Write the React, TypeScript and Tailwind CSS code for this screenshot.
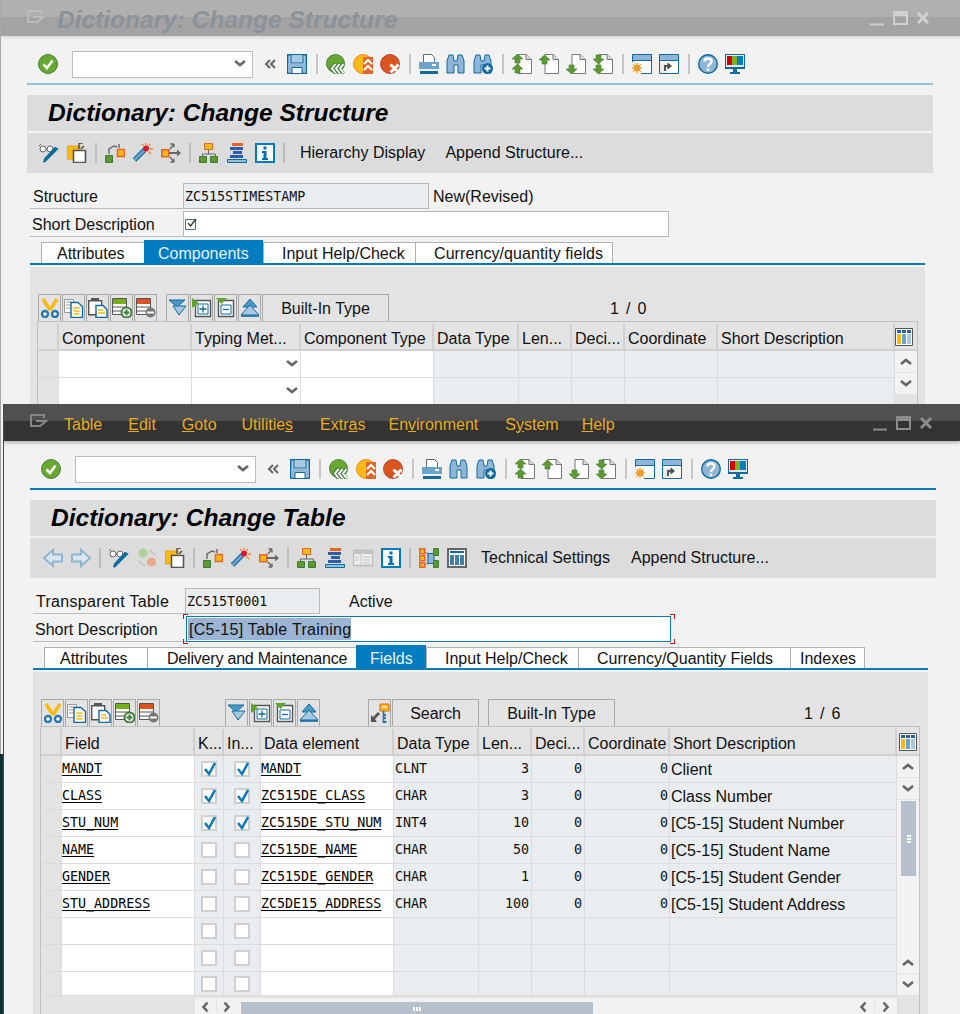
import React from 'react';

const BLUE = '#0f6a9e';
const LIGHT = '#8fb6d8';
const GREEN = '#5d9a2e';
const DGREEN = '#3f7d3a';
const ORANGE = '#e2662a';
const YELLOW = '#fdb913';
const GRAY = '#666666';

const Ic: React.FC<{ children: React.ReactNode; w?: number }> = ({ children, w = 20 }) => (
  <svg width={w} height={20} viewBox={`0 0 ${w} 20`} className="shrink-0 block">
    {children}
  </svg>
);

const OkIcon = () => (
  <Ic>
    <circle cx="10" cy="10" r="9.5" fill="#69a82f" stroke="#4c8044" />
    <path d="M5.5 10.5 9 14 14.5 6.5" fill="none" stroke="#fff" strokeWidth="2.6" />
  </Ic>
);
const SaveIcon = () => (
  <Ic>
    <path d="M.7.7h18.600v18.600H.7z" fill="#a9c8e2" stroke={BLUE} strokeWidth="1.400" />
    <path d="M4 1v8h12V1" fill="#a9c8e2" stroke={BLUE} />
    <path d="M1 9.500h18v9H1z" fill={LIGHT} />
    <path d="M5 13.500h10v6H5z" fill="#fff" stroke={BLUE} />
  </Ic>
);
const BackIcon = () => (
  <Ic>
    <circle cx="9.500" cy="9.500" r="9" fill="#69a82f" stroke="#4c8044" />
    <path d="M9.500 9.500l-4 5 4 5M13.500 9.500l-4 5 4 5M17.500 9.500l-4 5 4 5" fill="none" stroke="#3f7d3a" strokeWidth="3.400" />
    <path d="M9.500 10l-3.500 4.500 3.500 4.500M13.500 10l-3.500 4.500 3.500 4.500M17.500 10l-3.500 4.500 3.500 4.500" fill="none" stroke="#fff" strokeWidth="2" />
  </Ic>
);
const ExitIcon = () => (
  <Ic>
    <circle cx="10" cy="10" r="9.500" fill={YELLOW} stroke="#e58a2a" />
    <path d="M10 3h10v17H10z" fill={ORANGE} />
    <path d="M11 10l4-4 4 4M11 16l4-4 4 4" fill="none" stroke="#fff" strokeWidth="2.200" />
  </Ic>
);
const CancelIcon = () => (
  <Ic>
    <circle cx="10" cy="10" r="9.500" fill="#d9541e" stroke="#bf4a35" />
    <path d="M10.500 10.500l8 8M18.500 10.500l-8 8" stroke="#fff" strokeWidth="3" />
  </Ic>
);
const PrintIcon = () => (
  <Ic>
    <path d="M4.500.5h8l3 3v5h-11z" fill="#fff" stroke="#666" />
    <path d="M0 8h20v7H0z" fill="#6ba3cc" />
    <path d="M13 10h4v2h-4z" fill="#fff" />
    <path d="M1 17h18v3H1z" fill={BLUE} />
  </Ic>
);
const Binoc = ({ plus }: { plus?: boolean }) => (
  <Ic>
    <path d="M1 19V7l2-6h4l1 6h3l1-6h4l2 6v12h-6v-8H8v8z" fill={LIGHT} stroke={BLUE} />
    {plus && (
      <>
        <circle cx="14.500" cy="14.500" r="5.500" fill={BLUE} />
        <path d="M11.500 14.500h6M14.500 11.500v6" stroke="#fff" strokeWidth="2" />
      </>
    )}
  </Ic>
);
const UP = 'M5.500 0 11 5H8v4H3V5H0z';
const Page = ({ arrows }: { arrows: 'first' | 'prev' | 'next' | 'last' }) => (
  <Ic>
    <path d="M6 .5h8l5.500 5v14H6z" fill="#fff" stroke="#777" />
    <path d="M14 .5v5h5.500" fill="#ddd" stroke="#777" />
    <g fill={GREEN} stroke={DGREEN} strokeWidth=".6">
      {arrows === 'first' && (
        <>
          <path d={UP} />
          <path d={UP} transform="translate(0 10)" />
        </>
      )}
      {arrows === 'prev' && <path d={UP} transform="translate(0 1)" />}
      {arrows === 'next' && <path d={UP} transform="translate(0 20) scale(1 -1)" />}
      {arrows === 'last' && (
        <>
          <path d={UP} transform="translate(0 10) scale(1 -1)" />
          <path d={UP} transform="translate(0 20) scale(1 -1)" />
        </>
      )}
    </g>
  </Ic>
);
const WinSun = () => (
  <Ic>
    <path d="M.5.5h19v19H.5z" fill="#fff" stroke={BLUE} />
    <path d="M1 1h18v5H1z" fill={LIGHT} />
    <path d="M0 6h20v1H0z" fill={BLUE} />
    <path d="M0 8h9v12H0z" fill="#f2f2f2" />
    <circle cx="5" cy="14" r="3.500" fill="#f59a23" />
    <path d="M5 8.500v11M-.5 14h11M1 10l8 8M9 10l-8 8" stroke="#f59a23" />
  </Ic>
);
const WinArrow = () => (
  <Ic>
    <path d="M.5.5h19v19H.5z" fill="#fff" stroke={BLUE} />
    <path d="M1 1h18v5H1z" fill={LIGHT} />
    <path d="M0 6h20v1H0z" fill={BLUE} />
    <path d="M1 9h8v10H1z" fill="#ececec" />
    <path d="M6 17v-5h5M8.500 9.500 11.500 12 8.500 14.500" fill="none" stroke="#555" strokeWidth="2" />
  </Ic>
);
const HelpIcon = () => (
  <Ic>
    <circle cx="10" cy="10" r="9.300" fill="#8fb6d8" stroke={BLUE} strokeWidth="1.400" />
    <path d="M6.500 7.500C6.500 3.500 13.500 3.500 13.500 7.500 13.500 10 10 10 10 13" fill="none" stroke="#fff" strokeWidth="2.400" />
    <path d="M8.700 14.500h2.600v2.600H8.700z" fill="#fff" />
  </Ic>
);
const MonitorIcon = () => (
  <Ic>
    <path d="M0 0h20v15H0z" fill={BLUE} />
    <path d="M1 1h18v12H1z" fill="#dfe8ef" />
    <path d="M2 2h5v9H2z" fill="#d40000" />
    <path d="M7 2h5v9H7z" fill="#7ab51d" />
    <path d="M12 2h6v9h-6z" fill="#0a7dc2" />
    <path d="M8 15h4v3H8zM5 18h10v2H5z" fill={BLUE} />
  </Ic>
);

const GlassesPen = () => (
  <Ic>
    <circle cx="4" cy="6" r="3" fill="#fff" stroke="#666" />
    <circle cx="11" cy="6" r="3" fill="#fff" stroke="#666" />
    <path d="M0 3l2-2M7 6h1" stroke="#666" />
    <path d="M18 6 7 17l-2 2 1-3L16 5z" fill="#3f7fb5" stroke={BLUE} strokeWidth="2" />
  </Ic>
);
const CopyObj = () => (
  <Ic>
    <path d="M0 3h13v13H0z" fill={YELLOW} stroke="#e8a010" />
    <path d="M6.500 7.500h12v12h-12z" fill="#fff" stroke="#555" strokeWidth="1.600" />
    <path d="M12 0v6M12 0h4M14 6l3-3" stroke="#444" strokeWidth="1.300" fill="none" />
  </Ic>
);
const Circles = () => (
  <Ic>
    <circle cx="6" cy="5" r="4.500" fill="#b3d09a" />
    <circle cx="14.500" cy="14" r="4.500" fill="#eda98c" />
    <path d="M12 3c3 0 5 2 6 5M8 17c-3 0-5-2-6-5" fill="none" stroke="#c8c8c8" strokeWidth="2" />
  </Ic>
);
const Nodes = () => (
  <Ic>
    <path d="M.5 12.500h7v7h-7z" fill={GREEN} stroke={DGREEN} />
    <path d="M12.500 6.500h7v7h-7z" fill={YELLOW} stroke={ORANGE} strokeWidth="1.500" />
    <path d="M4 11V6l5-3 3 1M14 1v4" fill="none" stroke="#666" strokeWidth="1.400" />
  </Ic>
);
const Wand = () => (
  <Ic>
    <path d="M11.500 7 1.500 17" stroke={BLUE} strokeWidth="5" />
    <path d="M11.500 7 1.500 17" stroke="#6ba3cc" strokeWidth="2.600" />
    <circle cx="13" cy="5.500" r="3" fill="#e3142d" />
    <path d="M13 0v2M17 1l-1.500 1.500M20 6h-3M18 11l-2.500-2.500M9 1l1.500 1.500" stroke="#f08c1e" strokeWidth="1.400" />
  </Ic>
);
const Distribute = () => (
  <Ic>
    <path d="M.8 6.800h7v7h-7z" fill={YELLOW} stroke={ORANGE} strokeWidth="1.600" />
    <path d="M8 10h10" stroke="#666" strokeWidth="2" />
    <path d="M16 6.500l4 3.500-4 3.500z" fill="#666" />
    <path d="M9 6l4-5M13 1H9.500M13 1v3.500M9 14l4 5M13 19H9.500M13 19v-3.500" fill="none" stroke="#666" strokeWidth="1.300" />
  </Ic>
);
const Hierarchy = () => (
  <Ic>
    <path d="M5.500.5h8v6h-8z" fill={YELLOW} stroke={ORANGE} />
    <path d="M9.500 7v4M3.500 14v-3h13v3" fill="none" stroke="#666" />
    <path d="M.5 13.500h7v6h-7zM11.500 13.500h7v6h-7z" fill={GREEN} stroke={DGREEN} />
  </Ic>
);
const Stack = () => (
  <Ic>
    <path d="M5 0h11v3H5z" fill={ORANGE} />
    <path d="M3 4h13v3H3zM6 8h9v3H6zM3 12h13v3H3z" fill="#2c5ea8" />
    <path d="M.5 16.500h19v3H.5z" fill="#8fc3dd" stroke={BLUE} />
  </Ic>
);
const InfoIcon = () => (
  <Ic>
    <path d="M1 1h18v18H1z" fill="#fff" stroke="#007cc0" strokeWidth="2" />
    <path d="M8.500 3.500h3v3h-3zM7 8h4.500v7H13v2H7v-2h1.500V10H7z" fill="#0070b0" />
  </Ic>
);
const ArrowBack = ({ flip }: { flip?: boolean }) => (
  <Ic>
    <path
      d={flip ? 'M1 6.500h9V2l9 8-9 8v-4.500H1z' : 'M19 6.500h-9V2L1 10l9 8v-4.500h9z'}
      fill="#dbe6ef"
      stroke="#8fb6d0"
      strokeWidth="2"
    />
  </Ic>
);
const SheetGray = () => (
  <Ic>
    <path d="M.5 2.500h19v15H.5z" fill="#eee" stroke="#bcbcbc" strokeWidth="1.400" />
    <path d="M1 3h18v3H1z" fill="#c4c4c4" />
    <path d="M8 6v11M10 9h7M10 12h7M10 15h7M2 9h4M2 12h4" stroke="#c4c4c4" />
  </Ic>
);
const Blocks = () => (
  <Ic>
    <path d="M.8.800h5v5h-5zM.8 7.800h5v5h-5zM.8 14.800h5v4.500h-5z" fill={YELLOW} stroke={ORANGE} strokeWidth="1.500" />
    <path d="M6 5h3v11H6" fill="none" stroke="#888" />
    <path d="M9 5.500h6v10H9z" fill="#8fb6d8" stroke={BLUE} />
    <path d="M15 5h1M15 15h1" stroke="#888" />
    <path d="M14.500.500h5v7h-5zM14.500 12.500h5v7h-5z" fill={GREEN} stroke={DGREEN} />
  </Ic>
);
const TableIcon = () => (
  <Ic>
    <path d="M1 1h18v18H1z" fill="#fff" stroke="#666" strokeWidth="2" />
    <path d="M3 3h14v2H3z" fill={BLUE} />
    <path d="M3 7h4v10H3zM8 7h4v10H8zM13 7h4v10h-4z" fill="#3f7fa8" />
  </Ic>
);

const Scissors = () => (
  <Ic>
    <path d="M3 1l7 11M17 1 10 12" stroke={YELLOW} strokeWidth="3.600" />
    <circle cx="5" cy="16" r="3" fill="#fff" stroke="#2a78ae" strokeWidth="2.400" />
    <circle cx="15" cy="16" r="3" fill="#fff" stroke="#2a78ae" strokeWidth="2.400" />
  </Ic>
);
const CopyDoc = () => (
  <Ic>
    <path d="M.5 1.500h9v13h-9z" fill="#fff" stroke="#999" />
    <path d="M2 4h6M2 7h6M2 10h6" stroke="#999" />
    <path d="M7 4.500h7l4.500 4v11H7z" fill="#fff" stroke={BLUE} strokeWidth="1.400" />
    <path d="M9.500 10h6M9.500 13h6M9.500 16h6" stroke={YELLOW} strokeWidth="1.500" />
  </Ic>
);
const PasteDoc = () => (
  <Ic>
    <path d="M.7 2.700h13v14h-13z" fill="#fff" stroke="#555" strokeWidth="1.400" />
    <path d="M3 0h8v3H3z" fill="#555" />
    <path d="M8 7.500h7l4 4v8H8z" fill="#fff" stroke={BLUE} strokeWidth="1.400" />
    <path d="M10 12h5M10 15h7" stroke={YELLOW} strokeWidth="1.500" />
  </Ic>
);
const RowAdd = () => (
  <Ic>
    <path d="M.5.500h14v16H.5z" fill="#fff" stroke="#555" />
    <path d="M1 1h13v5H1z" fill="#72b01d" />
    <path d="M1 9h13M1 13h13" stroke="#555" />
    <circle cx="14.500" cy="14.500" r="5" fill="#fff" stroke={DGREEN} strokeWidth="2" />
    <path d="M11.500 14.500h6M14.500 11.500v6" stroke={DGREEN} strokeWidth="2" />
  </Ic>
);
const RowDel = () => (
  <Ic>
    <path d="M.5.500h14v16H.5z" fill="#fff" stroke="#555" />
    <path d="M1 1h13v5H1z" fill="#d9541e" />
    <path d="M1 9h13M1 13h13" stroke="#555" />
    <circle cx="14.500" cy="14.500" r="5" fill="#777" />
    <path d="M11 14.500h7" stroke="#fff" strokeWidth="2" />
  </Ic>
);
const FunnelDown = () => (
  <Ic>
    <path d="M1 2h16l-8 7z" fill="#4a9ac8" stroke={BLUE} />
    <path d="M5 8h13l-7 9z" fill="#a9c8e2" stroke={BLUE} />
  </Ic>
);
const FunnelUp = () => (
  <Ic>
    <path d="M10 1l7 8H3z" fill="#4a9ac8" stroke={BLUE} />
    <path d="M10 7l9 10H1z" fill="#a9c8e2" stroke={BLUE} />
    <path d="M1 18h18" stroke={BLUE} strokeWidth="1.600" />
  </Ic>
);
const FrameAdd = () => (
  <Ic>
    <path d="M3.500 2.500h15v16h-15z" fill="#fff" stroke="#555" strokeWidth="1.400" />
    <path d="M6 6h10v10H6z" fill="#fff" stroke={BLUE} />
    <path d="M7.500 11h7M11 7.500v7" stroke={BLUE} strokeWidth="1.300" />
    <path d="M0 0l7 5-7 5z" fill="#5fa52a" />
  </Ic>
);
const FrameDel = () => (
  <Ic>
    <path d="M2.500 2.500h15v16h-15z" fill="#fff" stroke="#555" strokeWidth="1.400" />
    <path d="M5 7h10v9H5z" fill="#fff" stroke={BLUE} />
    <path d="M7 11.500h6" stroke={BLUE} strokeWidth="1.300" />
    <path d="M0 0h11L5.500 6z" fill="#5fa52a" />
  </Ic>
);
const KeyIcon = () => (
  <Ic>
    <path d="M10 1h9v7h-9z" fill={YELLOW} stroke={ORANGE} />
    <path d="M12 4h5" stroke="#fff" />
    <path d="M13.500 8v11h3M16 12h-2M16 15h-2" fill="none" stroke="#2a78ae" strokeWidth="1.800" />
    <path d="M1 19V12l2 2 5-5 2 2-5 5 2 3z" fill="#555" />
  </Ic>
);
const ColumnsIcon = () => (
  <svg width={18} height={18} viewBox="0 0 18 18" className="block shrink-0">
    <path d="M.5.500h17v17H.5z" fill="#fff" stroke="#555" />
    <path d="M2 2h4v3H2zM7 2h4v3H7zM12 2h4v3h-4z" fill="#2c5ea8" />
    <path d="M2 6h4v10H2z" fill={YELLOW} />
    <path d="M7 6h4v10H7z" fill="#6ba3cc" />
    <path d="M12 6h4v10h-4z" fill="#a9c8e2" />
  </svg>
);

const Chev = ({ dir = 'down' }: { dir?: 'down' | 'up' | 'left' | 'right' | 'dleft' }) => {
  if (dir === 'dleft')
    return (
      <svg width={12} height={12} viewBox="0 0 12 12" className="block shrink-0">
        <path d="M6 2 2 6l4 4M11 2 7 6l4 4" fill="none" stroke={GRAY} strokeWidth="2" />
      </svg>
    );
  const d = {
    down: 'M2 3l5 4 5-4',
    up: 'M2 8l5-4 5 4',
    left: 'M8.500 1.500 4.500 6l4 4.500',
    right: 'M4.500 1.500 8.500 6l-4 4.500',
  }[dir];
  return (
    <svg width={14} height={12} viewBox="0 0 14 12" className="block shrink-0">
      <path d={d} fill="none" stroke={GRAY} strokeWidth="2.600" />
    </svg>
  );
};

const TopSep = () => <div className="w-[2px] h-5 bg-[#c6c6c6] ml-[2px] mr-[1px] shrink-0" />;
const BarSep = () => <div className="w-[2px] h-5 bg-[#bcbcbc] shrink-0" />;

const TitleBar: React.FC<{ active?: boolean; title?: string; menu?: [string, string, string, number][] }> = ({ active, title, menu }) => (
  <div
    className={
      active
        ? 'relative h-[37px] flex items-center shrink-0 bg-[linear-gradient(#505050_0_17px,#333333_17px)] shadow-[0_2px_3px_rgba(0,0,0,0.25)]'
        : 'relative h-[36px] flex items-center shrink-0 bg-[linear-gradient(#b0b0b0_0_17px,#a3a3a3_17px)] shadow-[0_2px_3px_rgba(0,0,0,0.1)]'
    }
  >
    <svg width={18} height={14} viewBox="0 0 18 14" className="ml-[26px] mb-[3px] shrink-0 block">
      <path d="M1 1h13v3M1 1v11h9l6-5H6" fill="none" stroke={active ? '#888888' : '#bcbcbc'} strokeWidth="2" />
    </svg>
    {title && (
      <span className="ml-[12px] mt-[4px] text-[24.5px] leading-none font-bold italic text-[#8b9299] whitespace-nowrap">{title}</span>
    )}
    {menu && (
      <div className="ml-[16px] mt-[4px] flex text-[#e8ad1e] text-[16px] leading-none whitespace-nowrap">
        {menu.map(([a, b, c, gap]) => (
          <span key={a + b + c} style={{ marginRight: gap }}>
            {a}
            <span className="underline">{b}</span>
            {c}
          </span>
        ))}
      </div>
    )}
    <div className={active ? 'ml-auto flex items-end mr-[25px] text-[#8c8c8c]' : 'ml-auto flex items-end mr-[28px] text-[#d0d0d0]'}>
      <svg width={62} height={16} viewBox="0 0 62 16" className="block" stroke="currentColor" fill="none">
        <path d="M0 14.500h14" strokeWidth="2" />
        <path d="M24 2h13v12H24z" strokeWidth="2" />
        <path d="M24 4h13" strokeWidth="4" />
        <path d="M48 3l10 10M58 3 48 13" strokeWidth="3" />
      </svg>
    </div>
  </div>
);

const MainToolbar = () => (
  <div className="h-[47px] pt-[9px] pl-[37px] flex items-center gap-[7px] shrink-0">
    <OkIcon />
    <div className="ml-[7px] w-[181px] h-[27px] bg-white border border-[#bcbcbc] flex items-center justify-end pr-[5px] shrink-0">
      <Chev />
    </div>
    <div className="ml-[4px] mr-[4px]">
      <Chev dir="dleft" />
    </div>
    <SaveIcon />
    <TopSep />
    <BackIcon />
    <ExitIcon />
    <CancelIcon />
    <TopSep />
    <PrintIcon />
    <Binoc />
    <Binoc plus />
    <TopSep />
    <Page arrows="first" />
    <Page arrows="prev" />
    <Page arrows="next" />
    <Page arrows="last" />
    <TopSep />
    <WinSun />
    <WinArrow />
    <TopSep />
    <HelpIcon />
    <MonitorIcon />
  </div>
);

const TitleBand: React.FC<{ active?: boolean; title: string; children: React.ReactNode }> = ({ active, title, children }) => (
  <div className="ml-[26px] w-[906px] shrink-0">
    <div className={active ? 'h-[2px] bg-[#0a7ab8]' : 'h-[2px] bg-[#8fc3dd]'} />
    <div className="mt-[10px] h-[36px] bg-[#dcdcdc] pl-[21px] flex items-center">
      <span className="text-[24.5px] leading-none font-bold italic text-black whitespace-nowrap">{title}</span>
    </div>
    <div className="mt-[2px] h-[40px] bg-[#dcdcdc] flex items-center gap-[8px] text-[16px] text-[#111111] whitespace-nowrap">
      {children}
    </div>
  </div>
);

const FormRow: React.FC<{ label: string; children: React.ReactNode; pad?: string }> = ({ label, children, pad = 'pl-[3px]' }) => (
  <div className="flex h-[26px] ml-[3px]">
    <div className={`w-[153px] border-b border-[#bcbcbc] text-[16px] leading-[27px] text-[#111111] whitespace-nowrap ${pad}`}>{label}</div>
    {children}
  </div>
);

type TabItem = { name: string; w: string; pl: string; extra?: string };

const Tabs: React.FC<{ items: TabItem[]; activeName: string }> = ({ items, activeName }) => (
  <div className="ml-[3px] w-[895px] mt-[5px] border-b-2 border-[#0a7ab8] h-[23px] pl-[11px] flex items-end shrink-0">
    {items.map((t, i) =>
      t.name === activeName ? (
        <div key={t.name} className={`${t.w} ${t.pl} h-[23px] bg-[#007cc0] text-[#e8f4fb] text-[16px] leading-[27px]`}>
          {t.name}
        </div>
      ) : (
        <div
          key={t.name}
          className={`${t.w} ${t.pl} ${t.extra ?? ''} ${i === items.length - 1 ? 'border-r' : ''} h-[21px] bg-white border-l border-t border-[#b0b0b0] text-[16px] leading-[21px] text-[#111111] whitespace-nowrap`}
        >
          {t.name}
        </div>
      ),
    )}
  </div>
);

const ToolBtn: React.FC<{ children: React.ReactNode }> = ({ children }) => (
  <div className="w-[23px] h-[27px] border-t border-l border-r border-[#a8a8a8] flex items-center justify-center shrink-0 overflow-hidden">
    {children}
  </div>
);
const TextBtn: React.FC<{ children: React.ReactNode; w: string }> = ({ children, w }) => (
  <div className={`${w} h-[27px] border-t border-l border-r border-[#a8a8a8] text-[16px] leading-[28px] text-center text-[#111111] shrink-0`}>
    {children}
  </div>
);

const HeadCell: React.FC<{ children?: React.ReactNode }> = ({ children }) => (
  <div className="h-[27px] border-r-2 border-b-2 border-[#d0d0d0] pl-[3px] text-[16px] leading-[30px] text-[#111111] whitespace-nowrap overflow-hidden">
    {children}
  </div>
);

const Cb = ({ on }: { on?: boolean }) => (
  <div className="w-[16px] h-[16px] bg-white border-2 border-[#cfcfcf] relative">
    {on && (
      <svg width={14} height={16} viewBox="0 0 14 16" className="absolute left-[0px] top-[-2px] block">
        <path d="M2 8l4 5 6-11" fill="none" stroke="#0a7ab8" strokeWidth="2.600" />
      </svg>
    )}
  </div>
);

const cellBase = 'border-r border-b border-[#dcdcdc] overflow-hidden whitespace-nowrap';

const ScrollBtn = ({ dir }: { dir: 'up' | 'down' }) => (
  <div className="h-[22px] bg-[#f2f2f2] border-b border-[#e3e3e3] flex items-center justify-center">
    <Chev dir={dir} />
  </div>
);

const COLS_ONE = 'grid-cols-[21px_133px_109px_133px_85px_53px_53px_93px_177px]';
const COLS_TWO = 'grid-cols-[21px_133px_29px_37px_133px_85px_53px_53px_85px_227px]';

const StructureTable = () => (
  <div className="ml-[7px] w-[881px] border-t border-l border-r border-[#c0c0c0] pt-[2px]">
    <div className="grid grid-cols-[21px_133px_109px_133px_85px_53px_53px_93px_177px_22px]">
      {['', 'Component', 'Typing Met...', 'Component Type', 'Data Type', 'Len...', 'Deci...', 'Coordinate', 'Short Description'].map((h) => (
        <HeadCell key={h}>{h}</HeadCell>
      ))}
      <div className="h-[27px] border-b-2 border-[#d0d0d0] pt-[4px]">
        <ColumnsIcon />
      </div>
    </div>
    <div className="flex">
      <div className="flex-1">
        {[0, 1, 2].map((r) => (
          <div key={r} className={`grid ${COLS_ONE} h-[27px]`}>
            <div className={cellBase} />
            <div className={`${cellBase} bg-white`} />
            <div className={`${cellBase} bg-white flex items-center justify-end pr-[1px]`}>
              <Chev />
            </div>
            <div className={`${cellBase} bg-white`} />
            {[0, 1, 2, 3, 4].map((c) => (
              <div key={c} className={`${cellBase} bg-[#e9edf0]`} />
            ))}
          </div>
        ))}
      </div>
      <div className="w-[22px]">
        <ScrollBtn dir="up" />
        <ScrollBtn dir="down" />
      </div>
    </div>
  </div>
);

const fields: [string, boolean, string, string, string, string, string][] = [
  ['MANDT', true, 'MANDT', 'CLNT', '3', '0', 'Client'],
  ['CLASS', true, 'ZC515DE_CLASS', 'CHAR', '3', '0', 'Class Number'],
  ['STU_NUM', true, 'ZC515DE_STU_NUM', 'INT4', '10', '0', '[C5-15] Student Number'],
  ['NAME', false, 'ZC515DE_NAME', 'CHAR', '50', '0', '[C5-15] Student Name'],
  ['GENDER', false, 'ZC515DE_GENDER', 'CHAR', '1', '0', '[C5-15] Student Gender'],
  ['STU_ADDRESS', false, 'ZC5DE15_ADDRESS', 'CHAR', '100', '0', '[C5-15] Student Address'],
  ['', false, '', '', '', '', ''],
  ['', false, '', '', '', '', ''],
  ['', false, '', '', '', '', ''],
];

const mono = "font-['DejaVu_Sans_Mono',monospace] text-[13.33px] leading-[26px]";

const FieldsTable = () => (
  <div className="ml-[7px] w-[880px] border-t border-l border-r border-[#c0c0c0] pt-[2px]">
    <div className="grid grid-cols-[21px_133px_29px_37px_133px_85px_53px_53px_85px_227px_22px]">
      {['', 'Field', 'K...', 'In...', 'Data element', 'Data Type', 'Len...', 'Deci...', 'Coordinate', 'Short Description'].map((h) => (
        <HeadCell key={h}>{h}</HeadCell>
      ))}
      <div className="h-[27px] border-b-2 border-[#d0d0d0] pt-[4px] pl-[2px]">
        <ColumnsIcon />
      </div>
    </div>
    <div className="flex">
      <div className="flex-1">
        {fields.map((f, i) => (
          <div key={i} className={`grid ${COLS_TWO} ${i === 8 ? 'h-[24px]' : 'h-[27px]'}`}>
            <div className={cellBase} />
            <div className={`${cellBase} bg-white ${mono}`}>
              <span className="underline underline-offset-2">{f[0]}</span>
            </div>
            <div className={`${cellBase} bg-[#e9edf0] flex items-center justify-center`}>
              <Cb on={f[1]} />
            </div>
            <div className={`${cellBase} bg-[#e9edf0] flex items-center justify-center`}>
              <Cb on={f[1]} />
            </div>
            <div className={`${cellBase} bg-white ${mono}`}>
              <span className="underline underline-offset-2">{f[2]}</span>
            </div>
            <div className={`${cellBase} bg-[#e9edf0] pl-px text-[#111111] ${mono}`}>{f[3]}</div>
            <div className={`${cellBase} bg-[#e9edf0] pr-[2px] text-right text-[#111111] ${mono}`}>{f[4]}</div>
            <div className={`${cellBase} bg-[#e9edf0] pr-[2px] text-right text-[#111111] ${mono}`}>{f[5]}</div>
            <div className={`${cellBase} bg-[#e9edf0] pr-px text-right text-[#111111] ${mono}`}>{f[5]}</div>
            <div className={`${cellBase} bg-[#e9edf0] pl-px text-[16px] leading-[27px] text-[#111111]`}>{f[6]}</div>
          </div>
        ))}
      </div>
      <div className="w-[22px] bg-[#f2f2f2] flex flex-col">
        <ScrollBtn dir="up" />
        <ScrollBtn dir="down" />
        <div className="ml-[4px] mt-[1px] w-[15px] h-[75px] bg-[#b5c0cc] flex flex-col items-center justify-center gap-px">
          <div className="w-[4px] h-[2px] bg-white" />
          <div className="w-[4px] h-[2px] bg-white" />
          <div className="w-[4px] h-[2px] bg-white" />
        </div>
        <div className="mt-auto">
          <ScrollBtn dir="up" />
          <ScrollBtn dir="down" />
        </div>
      </div>
    </div>
    <div className="mt-[2px] ml-[154px] w-[702px] h-[18px] bg-[#f2f2f2] flex items-center">
      <div className="w-[22px] flex justify-center border-r border-[#e3e3e3]">
        <Chev dir="left" />
      </div>
      <div className="w-[20px] flex justify-center">
        <Chev dir="right" />
      </div>
      <div className="ml-[4px] w-[352px] h-[14px] mt-[4px] bg-[#b5c0cc] flex items-center justify-center gap-px">
        <div className="w-[2px] h-[4px] bg-white" />
        <div className="w-[2px] h-[4px] bg-white" />
        <div className="w-[2px] h-[4px] bg-white" />
      </div>
      <div className="ml-auto w-[22px] flex justify-center border-r border-[#e3e3e3]">
        <Chev dir="left" />
      </div>
      <div className="w-[22px] flex justify-center">
        <Chev dir="right" />
      </div>
    </div>
  </div>
);

const ToolsLeft = () => (
  <>
    <ToolBtn><Scissors /></ToolBtn>
    <ToolBtn><CopyDoc /></ToolBtn>
    <ToolBtn><PasteDoc /></ToolBtn>
    <ToolBtn><RowAdd /></ToolBtn>
    <ToolBtn><RowDel /></ToolBtn>
  </>
);
const ToolsRight = () => (
  <>
    <ToolBtn><FunnelDown /></ToolBtn>
    <ToolBtn><FrameAdd /></ToolBtn>
    <ToolBtn><FrameDel /></ToolBtn>
    <ToolBtn><FunnelUp /></ToolBtn>
  </>
);

const StructureWindow = () => (
  <div className="h-[754px] border-l border-[#a8a8a8] bg-[#f2f2f2] flex flex-col overflow-hidden">
    <TitleBar title="Dictionary: Change Structure" />
    <MainToolbar />
    <TitleBand title="Dictionary: Change Structure">
      <div className="ml-[12px]"><GlassesPen /></div>
      <CopyObj />
      <BarSep />
      <Nodes />
      <Wand />
      <Distribute />
      <BarSep />
      <Hierarchy />
      <Stack />
      <InfoIcon />
      <BarSep />
      <span className="ml-[7px]">Hierarchy Display</span>
      <span className="ml-[12px]">Append Structure...</span>
    </TitleBand>
    <div className="ml-[26px] mt-[10px] w-[906px] flex flex-col gap-[2px]">
      <FormRow label="Structure">
        <div className="w-[246px] h-[26px] bg-[#e9edf0] border border-[#b8b8b8] pl-px font-['DejaVu_Sans_Mono',monospace] text-[13.33px] leading-[25px] text-[#111111]">
          ZC515STIMESTAMP
        </div>
        <span className="ml-[4px] text-[16px] leading-[27px] text-[#111111]">New(Revised)</span>
      </FormRow>
      <FormRow label="Short Description" pad="pl-[2px]">
        <div className="w-[486px] h-[26px] bg-white border border-[#b8b8b8] pl-[1px] flex items-center">
          <svg width={12} height={12} viewBox="0 0 12 12" className="block">
            <path d="M.5 1.500h10v10H.5z" fill="#fff" stroke="#4a6a8a" />
            <path d="M3 5l2.500 3L11 1" fill="none" stroke="#333" strokeWidth="1.300" />
          </svg>
        </div>
      </FormRow>
    </div>
    <div className="ml-[26px] w-[906px]">
      <Tabs
        activeName="Components"
        items={[
          { name: 'Attributes', w: 'w-[103px]', pl: 'pl-[15px]' },
          { name: 'Components', w: 'w-[119px]', pl: 'pl-[14px]' },
          { name: 'Input Help/Check', w: 'w-[152px]', pl: 'pl-[18px]' },
          { name: 'Currency/quantity fields', w: 'w-[198px]', pl: 'pl-[18px]', extra: 'tracking-[0.08px]' },
        ]}
      />
    </div>
    <div className="ml-[29px] mt-[2px] w-[895px] flex-1 bg-[#e3e3e3] pt-[27px]">
      <div className="flex pl-[8px] gap-px items-center h-[27px] relative">
        <ToolsLeft />
        <div className="w-[7px] shrink-0" />
        <ToolsRight />
        <TextBtn w="w-[127px]">Built-In Type</TextBtn>
        <span className="ml-[220px] mt-[2px] text-[16px] tracking-[1.3px] text-[#111111] whitespace-pre">1 / 0</span>
      </div>
      <StructureTable />
    </div>
  </div>
);

const Corner: React.FC<{ pos: string }> = ({ pos }) => <div className={`absolute w-[5px] h-[5px] border-[#c01818] ${pos}`} />;

const TableWindow = () => (
  <div className="absolute left-[3px] top-[404px] w-[957px] h-[610px] border-l border-[#4a4a4a] bg-[#f2f2f2] flex flex-col overflow-hidden">
    <TitleBar
      active
      menu={[
        ['Table', '', '', 26],
        ['', 'E', 'dit', 26],
        ['', 'G', 'oto', 25],
        ['Utilitie', 's', '', 27],
        ['Extr', 'a', 's', 23],
        ['En', 'v', 'ironment', 27],
        ['S', 'y', 'stem', 23],
        ['', 'H', 'elp', 0],
      ]}
    />
    <MainToolbar />
    <TitleBand active title="Dictionary: Change Table">
      <div className="ml-[13px]"><ArrowBack /></div>
      <ArrowBack flip />
      <BarSep />
      <GlassesPen />
      <Circles />
      <CopyObj />
      <BarSep />
      <Nodes />
      <Wand />
      <Distribute />
      <BarSep />
      <Hierarchy />
      <Stack />
      <SheetGray />
      <InfoIcon />
      <BarSep />
      <Blocks />
      <TableIcon />
      <span className="ml-[6px]">Technical Settings</span>
      <span className="ml-[13px]">Append Structure...</span>
    </TitleBand>
    <div className="ml-[26px] mt-[10px] w-[906px] flex flex-col gap-[2px]">
      <FormRow label="Transparent Table" pad="pl-[3px] tracking-[0.3px]">
        <div className="w-[135px] h-[26px] -ml-px bg-[#e9edf0] border border-[#b8b8b8] pl-px font-['DejaVu_Sans_Mono',monospace] text-[13.33px] leading-[25px] text-[#111111]">
          ZC515T0001
        </div>
        <span className="ml-[29px] text-[16px] leading-[27px] text-[#111111]">Active</span>
      </FormRow>
      <FormRow label="Short Description" pad="pl-[2px]">
        <div className="relative w-[485px] h-[26px] bg-white border border-[#0a7ab8] pl-px flex items-center text-[16px] text-[#111111]">
          <span className="bg-[#9bb4d4] h-[22px] leading-[23px] pl-[1px] tracking-[0.28px] whitespace-nowrap">[C5-15] Table Training</span>
          <Corner pos="-left-[4px] -top-[3px] border-l border-t" />
          <Corner pos="-left-[4px] -bottom-[3px] border-l border-b" />
          <Corner pos="-right-[5px] -top-[3px] border-r border-t" />
          <Corner pos="-right-[5px] -bottom-[3px] border-r border-b" />
        </div>
      </FormRow>
    </div>
    <div className="ml-[26px] w-[906px]">
      <Tabs
        activeName="Fields"
        items={[
          { name: 'Attributes', w: 'w-[103px]', pl: 'pl-[15px]' },
          { name: 'Delivery and Maintenance', w: 'w-[209px]', pl: 'pl-[19px]', extra: 'tracking-[-0.2px]' },
          { name: 'Fields', w: 'w-[70px]', pl: 'pl-[14px]' },
          { name: 'Input Help/Check', w: 'w-[152px]', pl: 'pl-[18px]' },
          { name: 'Currency/Quantity Fields', w: 'w-[212px]', pl: 'pl-[18px]' },
          { name: 'Indexes', w: 'w-[75px]', pl: 'pl-[9px]' },
        ]}
      />
    </div>
    <div className="ml-[29px] mt-[2px] w-[895px] flex-1 bg-[#e3e3e3] pt-[27px]">
      <div className="flex pl-[8px] gap-px items-center h-[27px]">
        <ToolsLeft />
        <div className="w-[63px] shrink-0" />
        <ToolsRight />
        <div className="w-[46px] shrink-0" />
        <ToolBtn><KeyIcon /></ToolBtn>
        <TextBtn w="w-[87px]">Search</TextBtn>
        <div className="w-[7px] shrink-0" />
        <TextBtn w="w-[127px]">Built-In Type</TextBtn>
        <span className="ml-[188px] mt-[2px] text-[16px] tracking-[1.3px] text-[#111111] whitespace-pre">1 / 6</span>
      </div>
      <FieldsTable />
    </div>
  </div>
);

export default function App() {
  return (
    <div className="relative w-[960px] h-[1014px] overflow-hidden bg-[#0c2f38] font-['Liberation_Sans',Arial,sans-serif]">
      <StructureWindow />
      <TableWindow />
    </div>
  );
}
